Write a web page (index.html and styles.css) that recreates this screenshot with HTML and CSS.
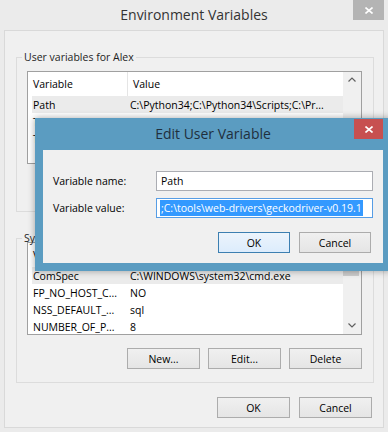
FILE: index.html
```html
<!DOCTYPE html>
<html lang="en">
<head>
  <meta charset="UTF-8" />
  <title>Environment Variables</title>
  <link rel="stylesheet" href="styles.css">
</head>
<body>
  <div class="window">
    <div class="titlebar">
      <span class="title">Environment Variables</span>
      <span class="close">
        <svg width="8" height="7" viewBox="0 0 8 7"><path d="M0.5 0.5 L7.5 6.5 M7.5 0.5 L0.5 6.5" stroke="#fff" stroke-width="1.6" fill="none"/></svg>
      </span>
    </div>

    <div class="client">
      <fieldset class="group user">
        <legend>User variables for Alex</legend>
        <div class="group-body">
          <div class="list">
            <div class="list-body">
              <div class="list-head"><span class="name">Variable</span><span class="value">Value</span></div>
              <div class="row selected"><span class="name">Path</span><span class="value">C:\Python34;C:\Python34\Scripts;C:\Pr...</span></div>
              <div class="row"><span class="name">TEMP</span></div>
              <div class="row"><span class="name">TMP</span></div>
            </div>
            <div class="scrollbar">
              <span class="scroll-btn"><svg width="8" height="5" viewBox="0 0 8 5"><path d="M0.5 4.5 L4 1 L7.5 4.5" stroke="#606060" stroke-width="1.2" fill="none"/></svg></span>
              <span class="track"><span class="thumb low"></span></span>
              <span class="scroll-btn"><svg width="8" height="5" viewBox="0 0 8 5"><path d="M0.5 0.5 L4 4 L7.5 0.5" stroke="#606060" stroke-width="1.2" fill="none"/></svg></span>
            </div>
          </div>
          <!-- the user buttons sit under the edit dialog -->
          <div class="buttons covered"></div>
        </div>
      </fieldset>

      <fieldset class="group system">
        <legend>System variables</legend>
        <div class="group-body">
          <div class="list">
            <div class="list-body">
              <div class="list-head"><span class="name">Variable</span><span class="value">Value</span></div>
              <div class="row selected"><span class="name">ComSpec</span><span class="value">C:\WINDOWS\system32\cmd.exe</span></div>
              <div class="row"><span class="name">FP_NO_HOST_C...</span><span class="value">NO</span></div>
              <div class="row"><span class="name">NSS_DEFAULT_...</span><span class="value">sql</span></div>
              <div class="row"><span class="name">NUMBER_OF_P...</span><span class="value">8</span></div>
            </div>
            <div class="scrollbar">
              <span class="scroll-btn"><svg width="8" height="5" viewBox="0 0 8 5"><path d="M0.5 4.5 L4 1 L7.5 4.5" stroke="#606060" stroke-width="1.2" fill="none"/></svg></span>
              <span class="track"><span class="thumb"></span></span>
              <span class="scroll-btn"><svg width="8" height="5" viewBox="0 0 8 5"><path d="M0.5 0.5 L4 4 L7.5 0.5" stroke="#606060" stroke-width="1.2" fill="none"/></svg></span>
            </div>
          </div>
          <div class="buttons">
            <button class="btn">New...</button>
            <button class="btn">Edit...</button>
            <button class="btn">Delete</button>
          </div>
        </div>
      </fieldset>

      <div class="buttons main-buttons">
        <button class="btn">OK</button>
        <button class="btn">Cancel</button>
      </div>
    </div>

    <div class="dialog">
      <div class="titlebar dialog-titlebar">
        <span class="title">Edit User Variable</span>
        <span class="close red">
          <svg width="8" height="7" viewBox="0 0 8 7"><path d="M0.5 0.5 L7.5 6.5 M7.5 0.5 L0.5 6.5" stroke="#fff" stroke-width="1.6" fill="none"/></svg>
        </span>
      </div>
      <div class="dialog-client">
        <div class="field">
          <label>Variable name:</label>
          <div class="input">Path</div>
        </div>
        <div class="field">
          <label>Variable value:</label>
          <div class="input focused"><span class="selection">;C:\tools\web-drivers\geckodriver-v0.19.1</span></div>
        </div>
        <div class="buttons dialog-buttons">
          <button class="btn default">OK</button>
          <button class="btn">Cancel</button>
        </div>
      </div>
    </div>
  </div>
</body>
</html>
```

FILE: styles.css
```css
* {
  box-sizing: border-box;
}

body {
  margin: 0;
  background: #ebebeb;
  font-family: "Segoe UI", "Open Sans", sans-serif;
  font-size: 10.5px;
  color: #000;
}

.window {
  position: relative;
  width: 388px;
  height: 432px;
  overflow: hidden;
  background: #ebebeb;
}

/* title bars */

.titlebar {
  display: grid;
  grid-template-columns: 1fr auto 1fr;
  height: 30px;
}

.titlebar .title {
  grid-column: 2;
  font-size: 14px;
  line-height: 30px;
  color: #333;
  white-space: nowrap;
}

.close {
  grid-column: 3;
  justify-self: end;
  align-self: start;
  display: flex;
  align-items: center;
  justify-content: center;
  width: 31px;
  height: 20px;
  margin-right: 4px;
  background: #b4b4b4;
}

.close.red {
  width: 29px;
  margin: 1px 0 0;
  background: #c75050;
}

/* main window body */

.client {
  height: 398px;
  margin: 0 4px;
  padding: 0 9px 0 11px;
  border: 1px solid #d9d9d9;
  background: #f0f0f0;
}

.group {
  margin: 18px 0 0;
  padding: 0;
  min-width: 0;
  border: 1px solid #dcdcdc;
}

.group legend {
  margin-left: 5px;
  padding: 0 2px;
  line-height: 16px;
  color: #1e1e1e;
}

.group-body {
  padding: 0 11px 13px 10px;
}

.user .list {
  margin-top: 6px;
}

.system .list {
  margin-top: -4px;
}

.list {
  display: flex;
  height: 93px;
  border: 1px solid #a0a0a0;
  background: #fff;
}

.list-body {
  flex: 1;
  overflow: hidden;
}

.list-head {
  display: flex;
  height: 24px;
  line-height: 24px;
}

.list-head span {
  padding-left: 5px;
}

.list-head .name {
  width: 100px;
  border-right: 1px solid #e5e5e5;
}

.row {
  display: flex;
  height: 17px;
  margin-left: 4px;
  padding-top: 1px;
  line-height: 17px;
  white-space: nowrap;
}

.row .name {
  width: 96px;
  padding-left: 1px;
}

.row .value {
  padding-left: 2px;
}

.row.selected {
  background: #ebebeb;
}

.scrollbar {
  display: flex;
  flex-direction: column;
  width: 18px;
  background: #f0f0f0;
}

.scroll-btn {
  display: flex;
  align-items: center;
  justify-content: center;
  height: 17px;
}

.track {
  flex: 1;
}

.thumb {
  display: block;
  height: 16px;
  margin: 0 2px 0 0;
  background: #cdcdcd;
}

.thumb.low {
  height: 26px;
  margin-top: 34px;
}

/* buttons */

.buttons {
  display: flex;
  justify-content: flex-end;
  gap: 8px;
  margin-top: 13px;
}

.buttons.covered {
  height: 21px;
}

.main-buttons {
  gap: 9px;
  margin: 14px 2px 0 0;
}

.btn {
  width: 73px;
  height: 21px;
  padding: 0;
  border: 1px solid #acacac;
  background: linear-gradient(#f0f0f0, #e5e5e5);
  font: inherit;
  color: #000;
}

.btn.default {
  border-color: #3c7fb1;
  background: linear-gradient(#ecf4fc, #dcecfc);
}

/* edit dialog, on top of the main window */

.dialog {
  position: absolute;
  left: 35px;
  top: 118px;
  width: 356px;
  padding: 0 8px 8px;
  background: #5b9cc1;
  box-shadow: 0 0 7px rgba(0, 0, 0, 0.35);
}

.dialog-titlebar {
  height: 32px;
}

.dialog-titlebar .title {
  line-height: 32px;
  color: #1f2f3d;
}

.dialog-client {
  padding: 21px 10px 10px;
  background: #f0f0f0;
}

.field {
  display: grid;
  grid-template-columns: 103px 1fr;
  align-items: center;
}

.field + .field {
  margin-top: 7px;
}

.input {
  height: 20px;
  padding-left: 4px;
  overflow: hidden;
  border: 1px solid #abadb3;
  background: #fff;
  line-height: 18px;
  white-space: nowrap;
}

.input.focused {
  border-color: #569de5;
  padding-left: 3px;
}

.selection {
  padding: 1px 1px;
  background: #3399ff;
  color: #fff;
}

.dialog-buttons {
  gap: 9px;
  margin: 14px 2px 0 0;
}

.dialog-buttons .btn {
  width: 72px;
}
```
